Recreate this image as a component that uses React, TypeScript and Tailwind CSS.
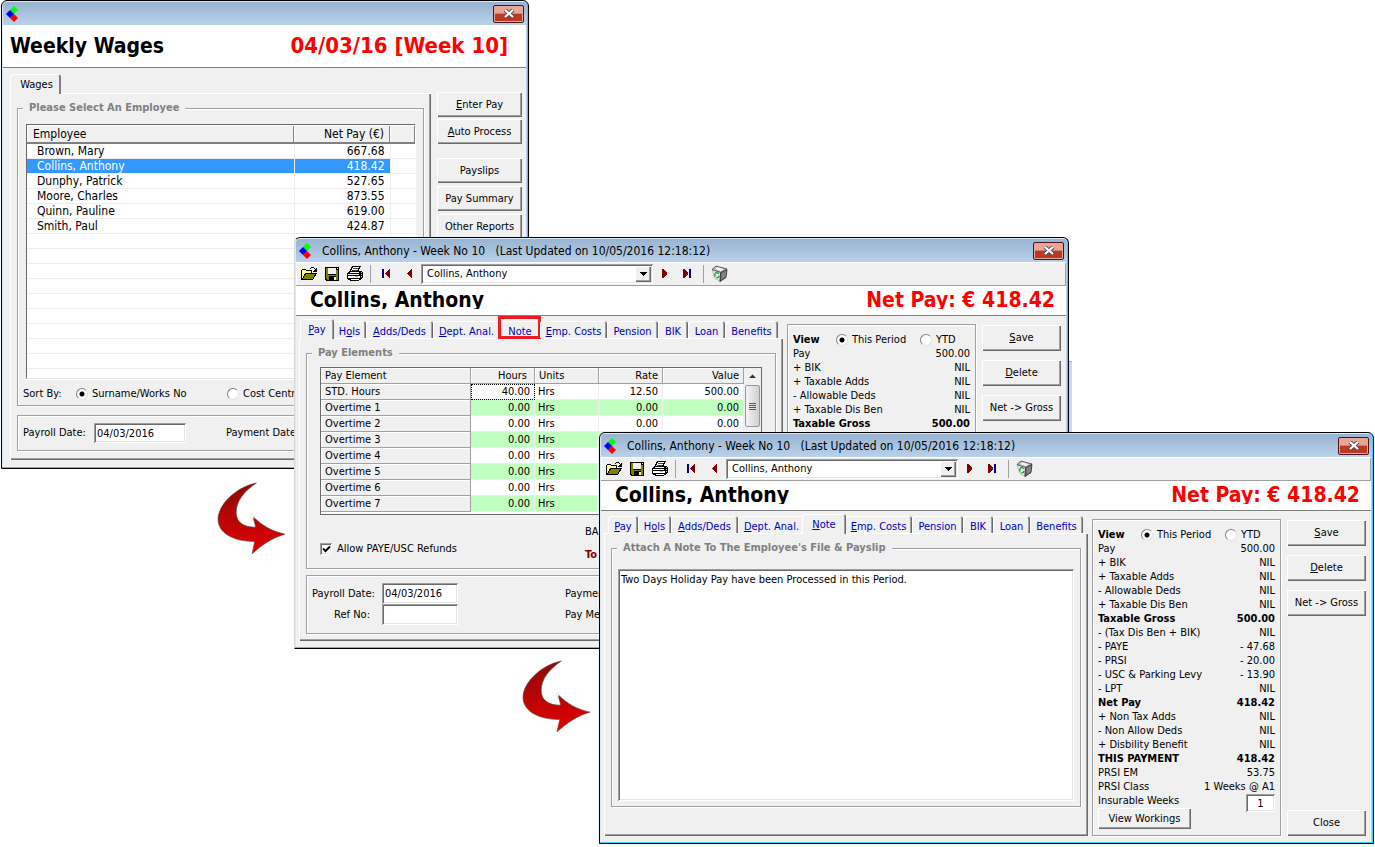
import React, { useId, useState } from 'react';

const BEVEL_OUT = 'shadow-[inset_1px_1px_0_#fff,inset_-1px_-1px_0_#696969,inset_-2px_-2px_0_#a0a0a0]';
const BEVEL_IN = 'shadow-[inset_1px_1px_0_#a0a0a0,inset_-1px_-1px_0_#fff,inset_2px_2px_0_#696969,inset_-2px_-2px_0_#e3e3e3]';
const GROOVE = 'border border-[#a0a0a0] shadow-[1px_1px_0_#fff,inset_1px_1px_0_#fff]';

const Logo = () => (
  <svg width="14" height="18" viewBox="0 0 14 18" className="shrink-0" aria-hidden="true">
    <path d="M8 1l4 4-4 4-4-4z" fill="#00ff00" />
    <path d="M8 9l4 4-4 4-4-4z" fill="#ff0000" />
    <path d="M4 5l4 4-4 4-4-4z" fill="#0000ff" />
  </svg>
);

const OpenIcon = () => (
  <svg width="16" height="14" viewBox="0 0 16 14" shapeRendering="crispEdges" aria-hidden="true">
    <path d="M0 3h1V2h4v1h6v3H5v1H4v2H3v2H2v2H0z" fill="#000" />
    <path d="M1 3h4v1h5v2H4v1H3v2H2v2H1z" fill="#ffff80" />
    <path d="M5 6h11v1h-1v2h-1v1h-1v2h-1v1H1v-1h1v-2h1V8h1V7h1z" fill="#000" />
    <path d="M5 7h9v1h-1v2h-1v2H2v-1h1V9h1V8h1z" fill="#808000" />
    <path d="M9 1h1V0h3v1h1v1h1V1h1v4h-4V4h1V3h1V2h-1V1h-3v1H9z" fill="#000" />
  </svg>
);

const SaveIcon = () => (
  <svg width="14" height="14" viewBox="0 0 14 14" shapeRendering="crispEdges" aria-hidden="true">
    <path d="M0 0h14v14H1v-1H0z" fill="#000" />
    <path d="M1 1h2v7h8V3h2v10H2v-1H1z" fill="#808000" />
    <path d="M3 1h8v6H3z" fill="#f0f0f0" />
    <path d="M12 1h1v1h-1z" fill="#f0f0f0" />
    <path d="M4 9h7v5H4z" fill="#000" />
    <path d="M9 10h2v3H9z" fill="#f0f0f0" />
  </svg>
);

const PrintIcon = () => (
  <svg width="17" height="15" viewBox="0 0 17 15" shapeRendering="crispEdges" aria-hidden="true">
    <path d="M5 0h9v1h-1v2h-1v2h3v1h1v6h-1v1h-1v1h-2v1H3v-1H1v-1H0V7h1V6h1V5h1V3h1V1h1z" fill="#000" />
    <path d="M6 1h6v1h-1v2h-1v1H4V4h1V2h1z" fill="#fff" />
    <path d="M6 2h5v1H6zM5 4h5v1H5z" fill="#404040" />
    <path d="M3 6h9v1H3zM1 8h11v1H1zM1 10h12v2H1z" fill="#fff" />
    <path d="M14 6h1v1h-1zM14 8h1v1h-1zM14 10h1v1h-1z" fill="#c0c0c0" />
    <path d="M8 10h3v1H8z" fill="#c0c000" />
    <path d="M4 13h8v1H4z" fill="#fff" />
  </svg>
);

const BinIcon = () => (
  <svg width="17" height="17" viewBox="0 0 17 17" aria-hidden="true">
    <path d="M1 4.500l8.500 3-.5 9L4 13.500z" fill="#ececec" stroke="#909090" strokeWidth=".6" />
    <path d="M9.500 7.500l6.500-3-1 8-6 4z" fill="#6b6b6b" stroke="#222" strokeWidth=".8" />
    <path d="M12 7.500v6M14 6v6" stroke="#b0b0b0" strokeWidth=".7" />
    <path d="M1 4.500L5 1l11 3-6.500 3.500z" fill="#b8b8b8" stroke="#444" strokeWidth=".8" />
    <path d="M4 4L6.500 2.200l6.500 2-3 1.800z" fill="#f4f4f4" />
    <path d="M4 8.500q2-2 3.700.3M8 10.800q-.5 2.500-2.600 1.600M4.200 11.500q-.9-1.300-.1-2.700" fill="none" stroke="#0a9c28" strokeWidth="1.300" />
  </svg>
);

const NavIcon = ({ dir, bar }: { dir: 'prev' | 'next'; bar?: boolean }) => (
  <svg width="10" height="9" viewBox="0 0 10 9" shapeRendering="crispEdges" aria-hidden="true">
    {dir === 'prev' ? <path d="M9 0v9h-1L4 5V4l4-4z" fill="#800000" /> : <path d="M1 0v9h1l4-4V4L2 0z" fill="#800000" />}
    {bar && <path d={dir === 'prev' ? 'M1 0h2v9H1z' : 'M7 0h2v9H7z'} fill="#000080" />}
  </svg>
);

const Arrow = ({ className }: { className: string }) => {
  const id = useId();
  return (
    <svg width="70" height="74" viewBox="-3 -3 208 220" className={className} aria-hidden="true">
      <defs>
        <linearGradient id={id} x1="0" y1="0" x2="0" y2="1">
          <stop offset="0" stopColor="#8c0808" />
          <stop offset=".5" stopColor="#b80505" />
          <stop offset="1" stopColor="#e40000" />
        </linearGradient>
      </defs>
      <path
        d="M114 0C54 12 0 64 0 108c0 42 48 66 109 66l-8 37c30-28 60-48 98-59-40-9-66-24-95-52l8 31c-34 2-58-14-58-43 0-34 22-62 60-88z"
        fill={`url(#${id})`}
        stroke="#6b4a44"
        strokeWidth="2"
      />
      <path d="M98 98q6-8 8 2l-2 8q-8-4-6-10z" fill="#fff" stroke="#d8a0a0" strokeWidth="1" />
    </svg>
  );
};

interface WindowProps {
  title?: string;
  className: string;
  children: React.ReactNode;
}

const Window: React.FC<WindowProps> = ({ title, className, children }) => (
  <section className={`absolute rounded-t-[6px] border border-black bg-[#b9d1ea] p-px shadow-[inset_-1px_-1px_0_#35d0f0,inset_1px_1px_0_#dce9f7] ${className}`}>
    <div className="flex h-[23px] items-center rounded-t-[4px] bg-linear-to-b from-[#99b4d1] to-[#b9d1ea] pr-[3px] pl-[3px]">
      <Logo />
      <h2 className="ml-[9px] flex-1 text-[12px] leading-4 whitespace-pre">{title}</h2>
      <button
        aria-label="Close window"
        className="flex h-[18px] w-[31px] items-center justify-center rounded-[2px] border border-[#4b1118] bg-linear-to-b from-[#e7a595] from-45% to-[#b93a24] to-50% shadow-[inset_0_0_0_1px_#e8a89c]"
      >
        <svg width="12" height="9" viewBox="0 0 12 9" aria-hidden="true">
          <path d="M2 1l8 7M10 1L2 8" stroke="#4a4a58" strokeWidth="4" />
          <path d="M2 1l8 7M10 1L2 8" stroke="#fff" strokeWidth="2.200" />
        </svg>
      </button>
    </div>
    <div className="mr-px bg-[#f0f0f0]">{children}</div>
  </section>
);

const PushButton: React.FC<{ hotkey?: string; label: string; className?: string }> = ({ hotkey, label, className = 'h-[26px]' }) => (
  <button className={`bg-[#f0f0f0] text-center ${BEVEL_OUT} ${className}`}>
    {hotkey && <span className="underline">{hotkey}</span>}
    {label}
  </button>
);

interface RadioProps {
  name: string;
  label: string;
  checked?: boolean;
  className?: string;
}

const Radio: React.FC<RadioProps> = ({ name, label, checked, className = '' }) => (
  <label className={`flex items-center gap-1 whitespace-nowrap ${className}`}>
    <input
      type="radio"
      name={name}
      defaultChecked={checked}
      className="size-3 shrink-0 appearance-none rounded-full border border-[#808080] border-r-[#e3e3e3] border-b-[#e3e3e3] bg-white checked:bg-[radial-gradient(circle,#000_2px,transparent_3px)]"
    />
    {label}
  </label>
);

interface Group {
  legend?: string;
  className: string;
  children: React.ReactNode;
}

const GroupBox: React.FC<Group> = ({ legend, className, children }) => (
  <fieldset className={`min-w-0 ${GROOVE} ${className}`}>
    {legend && <legend className="ml-[5px] bg-[#f0f0f0] px-[6px] leading-4 font-bold text-[#808080]">{legend}</legend>}
    {children}
  </fieldset>
);

/* ---------- Weekly wages ---------- */

const employees = [
  { name: 'Brown, Mary', net: '667.68' },
  { name: 'Collins, Anthony', net: '418.42' },
  { name: 'Dunphy, Patrick', net: '527.65' },
  { name: 'Moore, Charles', net: '873.55' },
  { name: 'Quinn, Pauline', net: '619.00' },
  { name: 'Smith, Paul', net: '424.87' },
];

const WagesWindow = () => {
  const [selected, setSelected] = useState('Collins, Anthony');
  const dateId = useId();
  const headCell = 'h-[18px] border-b-2 border-[#808080] bg-[#f0f0f0] font-normal shadow-[inset_1px_1px_0_#fff,inset_-1px_0_0_#808080]';

  return (
    <Window className="top-0 left-px w-[528px]">
      <header className="flex h-[43px] items-center justify-between border-b border-[#808080] bg-white pr-[18px] pl-[7px] font-bold">
        <h1 className="text-[21px]">Weekly Wages</h1>
        <span className="text-[22px] text-[#ff0000]">04/03/16 [Week 10]</span>
      </header>
      <div className="flex gap-[6px] pt-[6px] pr-1 pb-[7px] pl-[7px]">
        <div className="min-w-0 flex-1">
          <button className="relative z-10 -mb-px block h-5 w-[51px] rounded-t-[3px] bg-[#f0f0f0] pt-[2px] pl-[2px] shadow-[inset_1px_1px_0_#fff,inset_-2px_0_0_#808080]">Wages</button>
          <div className={`px-[7px] pt-[7px] pb-[9px] ${BEVEL_OUT}`}>
            <GroupBox legend="Please Select An Employee" className="pb-[3px]">
              <div className="mt-2 mr-2 ml-2 h-[255px] overflow-hidden border border-r-0 border-[#696969] border-b-[#e3e3e3] bg-white shadow-[1px_1px_0_#fff]">
                <table className="w-full table-fixed border-collapse text-[12px] leading-[14px]">
                  <thead>
                    <tr>
                      <th className={`${headCell} w-[267px] pl-[6px] text-left`}>Employee</th>
                      <th className={`${headCell} w-[96px] pr-[6px] text-right`}>Net Pay (€)</th>
                      <th className={headCell}></th>
                    </tr>
                  </thead>
                  <tbody>
                    {Array.from({ length: 16 }, (_, i) => {
                      const row = employees[i];
                      const active = row && row.name === selected;
                      return (
                        <tr key={i} className={active ? 'text-white' : ''} onClick={() => row && setSelected(row.name)}>
                          <td className={`h-[15px] border-r border-b border-[#eee] pl-[10px] ${active ? 'bg-[#3399ff]' : ''}`}>{row?.name}</td>
                          <td className={`h-[15px] border-r border-b border-[#eee] pr-[5px] text-right ${active ? 'bg-[#3399ff]' : ''}`}>{row?.net}</td>
                          <td className="h-[15px] border-b border-[#eee]"></td>
                        </tr>
                      );
                    })}
                  </tbody>
                </table>
              </div>
              <div className="mt-[7px] flex h-4 items-center pl-[5px]">
                <span className="w-[53px]">Sort By:</span>
                <Radio name="sort" label="Surname/Works No" checked className="w-[151px]" />
                <Radio name="sort" label="Cost Centre" />
              </div>
            </GroupBox>
            <GroupBox className="mt-[9px] flex h-9 items-center pl-[5px]">
              <label htmlFor={dateId} className="w-[71px]">Payroll Date:</label>
              <input id={dateId} defaultValue="04/03/2016" className={`h-5 w-[92px] bg-white px-[3px] ${BEVEL_IN}`} />
              <span className="ml-10">Payment Date:</span>
            </GroupBox>
          </div>
        </div>
        <div className="flex w-[85px] flex-col pt-[18px]">
          <PushButton hotkey="E" label="nter Pay" className="mb-[2px] h-[25px]" />
          <PushButton hotkey="A" label="uto Process" className="mb-[14px] h-[25px]" />
          <PushButton label="Payslips" className="mb-[3px] h-[25px]" />
          <PushButton label="Pay Summary" className="mb-[3px] h-[25px]" />
          <PushButton label="Other Reports" className="h-[25px]" />
        </div>
      </div>
    </Window>
  );
};

/* ---------- Employee pay ---------- */

type TabName = 'Pay' | 'Note';

const tabs = [
  { before: '', key: 'P', after: 'ay', width: 'w-[30px]' },
  { before: 'H', key: 'o', after: 'ls', width: 'w-[33px]' },
  { before: '', key: 'A', after: 'dds/Deds', width: 'w-[67px]' },
  { before: '', key: 'D', after: 'ept. Anal.', width: 'w-[67px]' },
  { before: '', key: 'N', after: 'ote', width: 'w-[40px]' },
  { before: '', key: 'E', after: 'mp. Costs', width: 'w-[67px]' },
  { before: 'Pension', key: '', after: '', width: 'w-[51px]' },
  { before: 'BIK', key: '', after: '', width: 'w-[30px]' },
  { before: 'Loan', key: '', after: '', width: 'w-[37px]' },
  { before: 'Benefits', key: '', after: '', width: 'w-[53px]' },
];

const summary = [
  { label: 'Pay', value: '500.00' },
  { label: '+ BIK', value: 'NIL' },
  { label: '+ Taxable Adds', value: 'NIL' },
  { label: '- Allowable Deds', value: 'NIL' },
  { label: '+ Taxable Dis Ben', value: 'NIL' },
  { label: 'Taxable Gross', value: '500.00', total: true },
  { label: '- (Tax Dis Ben + BIK)', value: 'NIL' },
  { label: '- PAYE', value: '- 47.68' },
  { label: '- PRSI', value: '- 20.00' },
  { label: '- USC & Parking Levy', value: '- 13.90' },
  { label: '- LPT', value: 'NIL' },
  { label: 'Net Pay', value: '418.42', total: true },
  { label: '+ Non Tax Adds', value: 'NIL' },
  { label: '- Non Allow Deds', value: 'NIL' },
  { label: '+ Disbility Benefit', value: 'NIL' },
  { label: 'THIS PAYMENT', value: '418.42', total: true },
  { label: 'PRSI EM', value: '53.75' },
  { label: 'PRSI Class', value: '1 Weeks @ A1' },
];

const elements = ['STD. Hours', 'Overtime 1', 'Overtime 2', 'Overtime 3', 'Overtime 4', 'Overtime 5', 'Overtime 6', 'Overtime 7'];

const PayGrid = () => {
  const head = 'h-4 border-r border-b border-[#a0a0a0] bg-[#f0f0f0] font-normal shadow-[inset_1px_1px_0_#fff]';
  return (
    <div className="mt-[6px] mr-[13px] ml-[13px] flex h-[148px] overflow-hidden border border-[#696969] bg-white">
      <table className="flex-1 table-fixed self-start border-separate border-spacing-0 leading-[15px]">
        <thead>
          <tr>
            <th className={`${head} w-[150px] pl-1 text-left`}>Pay Element</th>
            <th className={`${head} w-[64px] pr-[7px] text-right`}>Hours</th>
            <th className={`${head} w-[64px] pl-1 text-left`}>Units</th>
            <th className={`${head} w-[64px] pr-1 text-right`}>Rate</th>
            <th className={`${head} pr-1 text-right`}>Value</th>
          </tr>
        </thead>
        <tbody>
          {elements.map((name, i) => {
            const cell = `h-4 border-r border-b border-[#eee] ${i % 2 ? 'bg-[#c0ffc0]' : 'bg-white'}`;
            return (
              <tr key={name}>
                <th className={`${head} pl-1 text-left`}>{name}</th>
                <td className={`${cell} pr-1 text-right ${i === 0 ? 'outline-1 -outline-offset-1 outline-black outline-dotted' : ''}`}>{i === 0 ? '40.00' : '0.00'}</td>
                <td className={`${cell} pl-[3px]`}>Hrs</td>
                <td className={`${cell} pr-1 text-right`}>{i === 0 ? '12.50' : '0.00'}</td>
                <td className={`${cell} pr-1 text-right`}>{i === 0 ? '500.00' : '0.00'}</td>
              </tr>
            );
          })}
        </tbody>
      </table>
      <div className="flex w-[17px] flex-col items-center bg-[#f0f0f0]">
        <svg width="17" height="17" viewBox="0 0 17 17" aria-hidden="true">
          <path d="M5 10h7L8.500 6.500z" fill="#333" />
        </svg>
        <div className="flex h-[42px] w-[15px] flex-col items-center justify-center gap-px rounded-[2px] border border-[#979797] bg-linear-to-r from-[#f5f5f5] to-[#cfcfcf]">
          <i className="h-px w-[7px] bg-[#555]"></i>
          <i className="h-px w-[7px] bg-[#555]"></i>
          <i className="h-px w-[7px] bg-[#555]"></i>
          <i className="h-px w-[7px] bg-[#555]"></i>
        </div>
      </div>
    </div>
  );
};

const PayPanel = () => {
  const id = useId();
  return (
    <>
      <GroupBox legend="Pay Elements" className="pb-[6px]">
        <PayGrid />
        <div className="mt-[9px] flex pl-[13px]">
          <label className="mt-[17px] flex h-4 w-[265px] items-center gap-[5px]">
            <span className="grid size-3 place-items-center">
              <input type="checkbox" defaultChecked className={`peer col-start-1 row-start-1 size-3 appearance-none bg-white ${BEVEL_IN}`} />
              <svg width="12" height="12" viewBox="0 0 12 12" className="pointer-events-none invisible col-start-1 row-start-1 peer-checked:visible" aria-hidden="true">
                <path d="M3 5.500l2.500 2.500L10 3.500" fill="none" stroke="#000" strokeWidth="2" />
              </svg>
            </span>
            Allow PAYE/USC Refunds
          </label>
          <div className="flex flex-col gap-[9px] pt-px leading-[14px]">
            <span>BA</span>
            <b className="text-[#800000]">To</b>
          </div>
        </div>
      </GroupBox>
      <GroupBox className="mt-[6px] grid grid-cols-[75px_76px_1fr] pt-[7px] pb-2 leading-[21px]">
        <label htmlFor={`${id}-date`} className="pl-[5px]">Payroll Date:</label>
        <input id={`${id}-date`} defaultValue="04/03/2016" className={`h-[21px] bg-white px-[3px] ${BEVEL_IN}`} />
        <span className="pl-[107px]">Payment Date:</span>
        <label htmlFor={`${id}-ref`} className="pr-3 text-right">Ref No:</label>
        <input id={`${id}-ref`} className={`h-[21px] bg-white px-[3px] ${BEVEL_IN}`} />
        <span className="pl-[107px]">Pay Method:</span>
      </GroupBox>
    </>
  );
};

const NotePanel = () => (
  <GroupBox legend="Attach A Note To The Employee's File & Payslip" className="pb-[5px]">
    <div className="px-[6px] pt-[13px]">
      <textarea
        aria-label="Note"
        defaultValue="Two Days Holiday Pay have been Processed in this Period."
        className={`block h-[232px] w-full resize-none bg-white px-[3px] py-1 leading-[14px] ${BEVEL_IN}`}
      />
    </div>
  </GroupBox>
);

interface PayWindowProps {
  initialTab: TabName;
  highlight?: string;
  className: string;
}

const PayWindow: React.FC<PayWindowProps> = ({ initialTab, highlight, className }) => {
  const [tab, setTab] = useState<string>(initialTab);
  const id = useId();

  return (
    <Window title="Collins, Anthony - Week No 10   (Last Updated on 10/05/2016 12:18:12)" className={`w-[775px] ${className}`}>
      <div className="flex h-6 items-center border-b border-[#a0a0a0] pl-[5px] shadow-[inset_1px_1px_0_#fff,inset_-1px_0_0_#a0a0a0]">
        <button aria-label="Open" className="w-6"><OpenIcon /></button>
        <button aria-label="Save record" className="w-[22px]"><SaveIcon /></button>
        <button aria-label="Print" className="w-[23px]"><PrintIcon /></button>
        <i className="mr-[10px] h-[18px] w-px bg-[#a0a0a0]"></i>
        <button aria-label="First" className="w-[22px]"><NavIcon dir="prev" bar /></button>
        <button aria-label="Previous" className="w-[18px]"><NavIcon dir="prev" /></button>
        <div className={`relative h-5 w-[232px] bg-white ${BEVEL_IN}`}>
          <select aria-label="Employee" className="h-5 w-full appearance-none pt-px pr-5 pl-[6px]">
            <option>Collins, Anthony</option>
          </select>
          <span className={`pointer-events-none absolute top-[2px] right-[2px] grid h-4 w-[16px] place-items-center bg-[#f0f0f0] ${BEVEL_OUT}`}>
            <svg width="7" height="4" viewBox="0 0 7 4" shapeRendering="crispEdges" aria-hidden="true">
              <path d="M0 0h7v1H6v1H5v1H4v1H3V3H2V2H1V1H0z" fill="#000" />
            </svg>
          </span>
        </div>
        <button aria-label="Next" className="ml-2 w-[21px]"><NavIcon dir="next" /></button>
        <button aria-label="Last" className="w-[21px]"><NavIcon dir="next" bar /></button>
        <i className="mr-[7px] h-[18px] w-px bg-[#a0a0a0]"></i>
        <button aria-label="Recycle bin"><BinIcon /></button>
      </div>

      <header className="flex h-[30px] justify-between border-b border-[#808080] bg-white pt-[3px] pr-[11px] pl-[14px] text-[21px] leading-[22px] font-bold">
        <h1 className="h-5 overflow-hidden">Collins, Anthony</h1>
        <span className="h-5 overflow-hidden text-[#ff0000]">Net Pay: € 418.42</span>
      </header>

      <div className="flex pt-[3px] pr-[5px] pb-[6px] pl-[3px]">
        <div className="flex min-w-0 flex-1 flex-col">
          <nav className="flex h-[19px] items-end pl-1">
            {tabs.map(({ before, key, after, width }) => {
              const name = before + key + after;
              const active = name === tab;
              return (
                <div key={name} className={`relative ${width}`}>
                  <button
                    onClick={() => setTab(name)}
                    className={`block rounded-t-[3px] text-center whitespace-nowrap text-[#0000c0] shadow-[inset_1px_1px_0_#fff,inset_-1px_0_0_#696969,inset_-2px_0_0_#a0a0a0] ${active ? 'relative z-10 -mr-px -mb-px -ml-[3px] h-5 w-[calc(100%+4px)] bg-[#f0f0f0] pt-px' : 'h-[17px] w-full pt-[3px]'}`}
                  >
                    {before}
                    {key && <span className="underline">{key}</span>}
                    {after}
                  </button>
                  {highlight === name && <span className="pointer-events-none absolute -top-[5px] -right-px -bottom-px -left-[2px] border-[3px] border-[#ed1c24]"></span>}
                </div>
              );
            })}
          </nav>
          <div className={`flex-1 px-[7px] pt-[7px] pb-[7px] ${BEVEL_OUT}`}>
            {tab === 'Note' ? <NotePanel /> : <PayPanel />}
          </div>
        </div>

        <div className={`mt-[5px] ml-1 w-[189px] pt-2 pr-[5px] pb-[6px] pl-[5px] leading-[14px] ${GROOVE}`}>
          <div className="flex items-center">
            <b className="w-[43px]">View</b>
            <Radio name={`${id}-view`} label="This Period" checked className="w-[84px]" />
            <Radio name={`${id}-view`} label="YTD" />
          </div>
          <dl>
            {summary.map((row) => (
              <div key={row.label} className={`flex justify-between whitespace-nowrap ${row.total ? 'font-bold' : ''}`}>
                <dt>{row.label}</dt>
                <dd>{row.value}</dd>
              </div>
            ))}
          </dl>
          <div className="flex items-start justify-between">
            <div>
              <label htmlFor={`${id}-weeks`} className="block">Insurable Weeks</label>
              <PushButton label="View Workings" className="block h-[21px] w-[93px]" />
            </div>
            <input id={`${id}-weeks`} defaultValue="1" className={`h-[18px] w-[29px] bg-white text-center ${BEVEL_IN}`} />
          </div>
        </div>

        <div className="mt-[6px] ml-[6px] flex w-[79px] flex-col gap-[9px]">
          <PushButton hotkey="S" label="ave" />
          <PushButton hotkey="D" label="elete" />
          <PushButton label="Net -> Gross" />
          <PushButton label="Close" className="mt-auto h-[26px]" />
        </div>
      </div>
    </Window>
  );
};

export default function App() {
  return (
    <main className="relative min-h-screen overflow-hidden bg-white font-['DejaVu_Sans_Condensed','DejaVu_Sans',sans-serif] text-[11px] leading-4 text-black">
      <div className="absolute top-[361px] left-[1000px] h-[72px] w-[72px] border-t border-[#e0a070] bg-[#c5d9f7]"></div>
      <WagesWindow />
      <Arrow className="absolute top-[482px] left-[217px]" />
      <PayWindow initialTab="Pay" highlight="Note" className="top-[237px] left-[294px] border-l-[#d8d8d8]" />
      <Arrow className="absolute top-[660px] left-[522px]" />
      <PayWindow initialTab="Note" className="top-[432px] left-[599px]" />
    </main>
  );
}
